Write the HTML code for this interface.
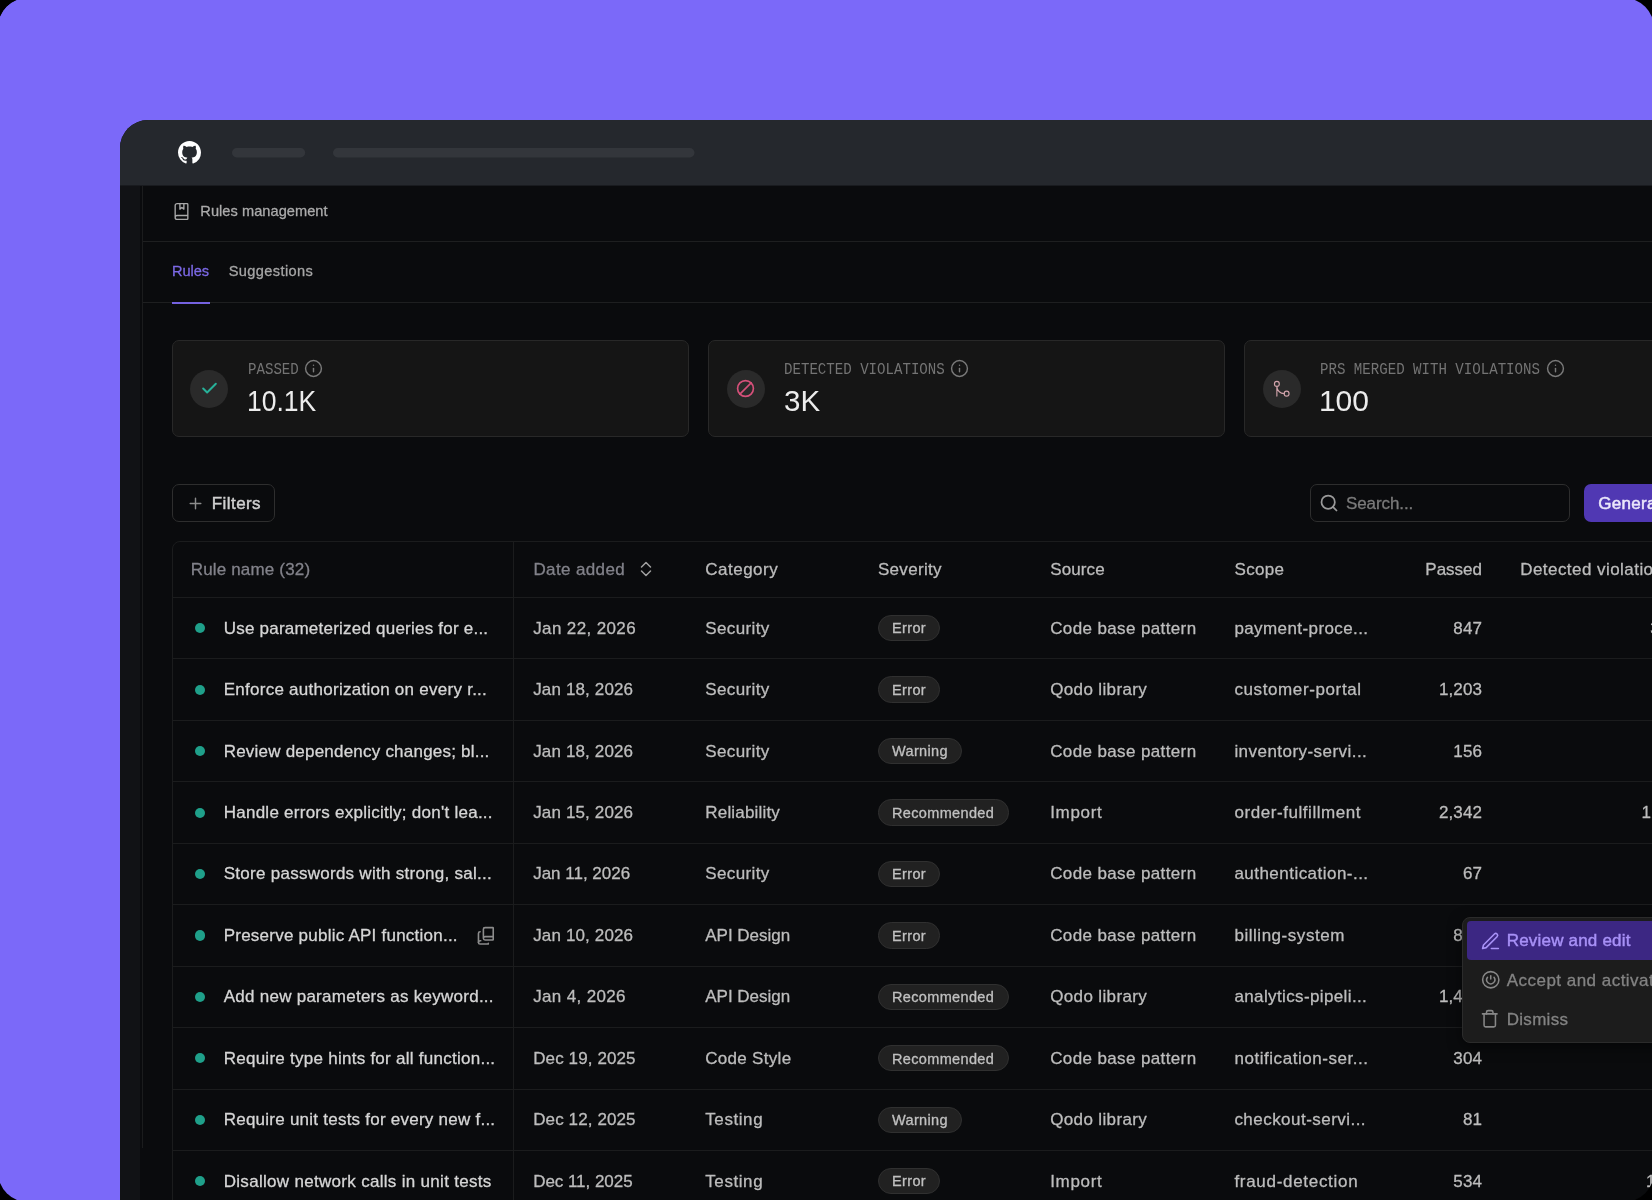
<!DOCTYPE html>
<html>
<head>
<meta charset="utf-8">
<style>
*{box-sizing:border-box;margin:0;padding:0}
html{background:#000;}
body{width:1652px;height:1200px;overflow:hidden;position:relative;background:#000;font-family:"Liberation Sans",sans-serif;}
.page{position:absolute;left:-2px;top:-2px;width:1656px;height:1204px;border-radius:30px;overflow:hidden;}
.bg{position:absolute;left:0;top:0;background:#7b69f9;}
.win{position:absolute;left:122px;top:122px;width:1700px;height:1200px;background:#0a0b0d;border-top-left-radius:28px;overflow:hidden;}
.abs{position:absolute;left:-120px;top:-120px;width:1652px;height:1200px;will-change:transform;}
.abs *{position:absolute;}
.topbar{left:120px;top:120px;width:1600px;height:65px;background:#25282d;}
.ph{background:#33363b;height:10px;border-radius:5px;top:148px;}
.side{left:120px;top:185px;width:20px;height:1100px;background:#111215;}
.sideline{left:142px;top:185px;width:1px;height:963px;background:#1b1c1d;}
.hline{left:143px;width:1600px;height:1px;background:#1e1f20;}
.t{white-space:pre;line-height:20px;height:20px;-webkit-text-stroke:.3px;}
.card{top:340px;height:97px;width:517px;background:#151515;border:1px solid #282828;border-radius:7px;}
.circ{width:38px;height:38px;border-radius:50%;background:#2a2a2a;top:369.500px;}
.lab{font-family:"Liberation Mono",monospace;font-size:15.6px;color:#747474;top:360.400px;line-height:20px;white-space:pre;transform:scaleX(.904);transform-origin:0 0;}
.val{font-size:30px;color:#ececec;top:383.800px;line-height:34px;white-space:pre;transform-origin:0 0;}
.btn{border:1px solid #2e2e2e;border-radius:7px;}
svg{overflow:visible}
.ic{fill:none;stroke-linecap:round;stroke-linejoin:round;}
.tbl{left:172px;top:541px;width:1600px;height:700px;border:1px solid #1b1c1d;border-radius:8px 0 0 0;}
.rl{left:173px;width:1600px;height:1px;background:#1b1c1d;}
.vl{left:513px;top:542px;width:1px;height:700px;background:#1b1c1d;}
.row{left:0;width:1652px;height:61px;}
.row .t{font-size:17px;letter-spacing:.3px;color:#bdbdbd;top:21.400px;}
.row .n{color:#d6d6d6;}
.dot{left:194.900px;top:25.900px;width:10.200px;height:10.200px;border-radius:50%;background:#1fa08a;}
.row .c6{left:1382px;width:100px;text-align:right;letter-spacing:.1px;}
.badge{left:878px;top:17.700px;height:26.400px;border-radius:13.200px;background:#212121;border:1px solid #303030;}
.row .badge .t{left:13px;top:2.500px;font-size:14.500px;letter-spacing:.35px;color:#c0c0c0;line-height:20px;height:20px;}
.hd .t{font-size:17px;letter-spacing:.3px;color:#bcbcbc;top:559.600px;}
.hd .dim{color:#82828a;}
.menu{left:1462px;top:917px;width:260px;height:126px;background:#1c1c1c;border:1px solid #2b2b2b;border-radius:8px;box-shadow:0 4px 14px rgba(0,0,0,.5);}
.mi{left:4px;width:260px;height:39px;}
.mi .t{left:39.700px;top:10px;font-size:17px;letter-spacing:.3px;color:#838383;}
.mi.on{background:#3c2783;border-radius:4px 0 0 4px;}
.mi.on .t{color:#a891f7;-webkit-text-stroke:.45px;}
</style>
</head>
<body>
<div class="page">
<div class="bg" style="width:1656px;height:170px"></div><div class="bg" style="width:170px;height:1204px"></div>
<div class="win"><div class="abs">

<div class="side"></div>
<div class="sideline"></div>
<div class="topbar"></div>
<div style="left:120px;top:185px;width:1600px;height:1px;background:#191b1f"></div>
<svg style="left:178.200px;top:140.800px" width="23" height="23" viewBox="0 0 16 16"><path fill="#ffffff" d="M8 0c4.42 0 8 3.58 8 8a8.013 8.013 0 0 1-5.45 7.59c-.4.08-.55-.17-.55-.38 0-.27.01-1.13.01-2.2 0-.75-.25-1.23-.54-1.48 1.78-.2 3.65-.88 3.65-3.95 0-.88-.31-1.59-.82-2.15.08-.2.36-1.02-.08-2.12 0 0-.67-.22-2.2.82-.64-.18-1.32-.27-2-.27-.68 0-1.36.09-2 .27-1.53-1.03-2.2-.82-2.2-.82-.44 1.1-.16 1.92-.08 2.12-.51.56-.82 1.28-.82 2.15 0 3.06 1.86 3.75 3.64 3.95-.23.2-.44.55-.51 1.07-.46.21-1.61.55-2.33-.66-.15-.24-.6-.83-1.23-.82-.67.01-.27.38.01.53.34.19.73.9.82 1.13.16.45.68 1.31 2.69.94 0 .67.01 1.3.01 1.49 0 .21-.15.45-.55.38A7.995 7.995 0 0 1 0 8c0-4.42 3.58-8 8-8Z"/></svg>
<svg style="left:0;top:0" width="800" height="200"><rect x="232" y="148.100" width="73.200" height="9.400" rx="4.700" fill="#33363b"/><rect x="333" y="148.100" width="361.500" height="9.400" rx="4.700" fill="#33363b"/></svg>

<!-- section title -->
<svg class="ic" style="left:171.600px;top:201.600px" width="19" height="19" viewBox="0 0 24 24" stroke="#a9a9a9" stroke-width="1.7"><path d="M10 2v7l2.500-2.200L15 9V2"/><path d="M4 19.500v-15A2.500 2.500 0 0 1 6.500 2H19a1 1 0 0 1 1 1v18a1 1 0 0 1-1 1H6.500a1 1 0 0 1 0-5H20"/></svg>
<div class="t" style="left:200.300px;top:200.800px;font-size:14.600px;color:#ababab;letter-spacing:0.049px">Rules management</div>
<div class="hline" style="top:241px"></div>

<!-- tabs -->
<div class="t" style="left:172px;top:261.300px;font-size:14.600px;color:#7c69e6;letter-spacing:-0.078px">Rules</div>
<div class="t" style="left:228.700px;top:261.300px;font-size:14.600px;color:#a6a6a6;letter-spacing:0.387px">Suggestions</div>
<div class="hline" style="top:302px"></div>
<div style="left:171.600px;top:301.600px;width:38px;height:2.400px;background:#7562e0"></div>

<!-- stat cards -->
<div class="card" style="left:172px"></div>
<div class="card" style="left:708px"></div>
<div class="card" style="left:1244px"></div>

<div class="circ" style="left:190px"></div>
<svg class="ic" style="left:199.700px;top:378.600px" width="19" height="19" viewBox="0 0 24 24" stroke="#27b199" stroke-width="2.5"><path d="M20 6 9 17l-5-5"/></svg>
<div class="lab" style="left:247.500px">PASSED</div>
<svg class="ic" style="left:303.8px;top:359.0px" width="19" height="19" viewBox="0 0 24 24" stroke="#7a7a7a" stroke-width="1.8"><circle cx="12" cy="12" r="10"/><path d="M12 16v-4"/><path d="M12 8h.01"/></svg>
<div class="val" style="left:246.500px;transform:scaleX(.884)">10.1K</div>

<div class="circ" style="left:726.500px"></div>
<svg class="ic" style="left:736.100px;top:379px" width="19" height="19" viewBox="0 0 24 24" stroke="#d6507a" stroke-width="2.1"><circle cx="12" cy="12" r="10"/><path d="M4.900 19.100 19.100 4.900"/></svg>
<div class="lab" style="left:783.800px">DETECTED VIOLATIONS</div>
<svg class="ic" style="left:949.8px;top:359.0px" width="19" height="19" viewBox="0 0 24 24" stroke="#7a7a7a" stroke-width="1.8"><circle cx="12" cy="12" r="10"/><path d="M12 16v-4"/><path d="M12 8h.01"/></svg>
<div class="val" style="left:783.500px;transform:scaleX(.985)">3K</div>

<div class="circ" style="left:1262.700px"></div>
<svg class="ic" style="left:1272.200px;top:378.900px" width="19.500" height="19.500" viewBox="0 0 24 24" stroke="#d2a4ac" stroke-width="1.4"><circle cx="18" cy="18" r="3"/><circle cx="6" cy="6" r="3"/><path d="M6 21V9a9 9 0 0 0 9 9"/></svg>
<div class="lab" style="left:1319.700px">PRS MERGED WITH VIOLATIONS</div>
<svg class="ic" style="left:1545.8px;top:359.0px" width="19" height="19" viewBox="0 0 24 24" stroke="#7a7a7a" stroke-width="1.8"><circle cx="12" cy="12" r="10"/><path d="M12 16v-4"/><path d="M12 8h.01"/></svg>
<div class="val" style="left:1318.900px">100</div>

<!-- toolbar -->
<div class="btn" style="left:171.700px;top:484px;width:103.800px;height:38px"></div>
<svg class="ic" style="left:187.700px;top:495.800px" width="15" height="15" viewBox="0 0 24 24" stroke="#8c8c8c" stroke-width="2.300"><path d="M3.500 12h17M12 3.500v17"/></svg>
<div class="t" style="left:211.800px;top:493.500px;font-size:17px;letter-spacing:0.42px;color:#d0d0d0;-webkit-text-stroke:.45px">Filters</div>

<div class="btn" style="left:1310px;top:484px;width:260px;height:38px"></div>
<svg class="ic" style="left:1318.700px;top:492.900px" width="20" height="20" viewBox="0 0 24 24" stroke="#9a9a9a" stroke-width="2.100"><circle cx="11" cy="11" r="8"/><path d="m21 21-4.300-4.300"/></svg>
<div class="t" style="left:1346px;top:494px;font-size:17px;letter-spacing:-0.093px;color:#7b7b7b">Search...</div>

<div style="left:1584px;top:484px;width:120px;height:38px;background:#5038b3;border-radius:7px 0 0 7px"></div>
<div class="t" style="left:1598.200px;top:494px;font-size:17px;letter-spacing:.3px;color:#ece8fb;-webkit-text-stroke:.5px">Generate rules</div>

<!-- table -->
<div class="tbl"></div>
<div class="vl"></div>

<div class="hd"><div class="t dim" style="left:190.7px;letter-spacing:0.171px;">Rule name (32)</div><div class="t dim" style="left:533.4px;letter-spacing:0.377px;">Date added</div><div class="t " style="left:705.3px;letter-spacing:0.488px;">Category</div><div class="t " style="left:877.9px;letter-spacing:0.325px;">Severity</div><div class="t " style="left:1050.3px;letter-spacing:0.085px;">Source</div><div class="t " style="left:1234.6px;letter-spacing:0.299px;">Scope</div><div class="t " style="left:1520.2px;letter-spacing:0.45px;">Detected violations</div><div class="t" style="left:1382px;width:100px;text-align:right;letter-spacing:-0.001px">Passed</div></div>
<svg class="ic" style="left:640.300px;top:561.200px" width="12" height="16" viewBox="0 0 12 16" stroke="#a0a0a0" stroke-width="1.500"><path d="M1.500 6 6 1.500 10.500 6"/><path d="M1.500 10 6 14.500 10.500 10"/></svg>

<div class="rl" style="top:597px"></div>
<div class="rl" style="top:658px"></div>
<div class="rl" style="top:720px"></div>
<div class="rl" style="top:781px"></div>
<div class="rl" style="top:843px"></div>
<div class="rl" style="top:904px"></div>
<div class="rl" style="top:966px"></div>
<div class="rl" style="top:1027px"></div>
<div class="rl" style="top:1089px"></div>
<div class="rl" style="top:1150px"></div>
<div class="rl" style="top:1211px"></div>

<div class="row" style="top:597.30px"><div class="dot"></div><div class="t n" style="left:223.7px;letter-spacing:0.224px;">Use parameterized queries for e...</div><div class="t " style="left:533.2px;letter-spacing:0.372px;">Jan 22, 2026</div><div class="t " style="left:705.3px;letter-spacing:0.375px;">Security</div><div class="badge" style="width:62.4px"><div class="t">Error</div></div><div class="t " style="left:1050.2px;letter-spacing:0.376px;">Code base pattern</div><div class="t " style="left:1234.4px;letter-spacing:0.409px;">payment-proce...</div><div class="t c6">847</div><div class="t" style="left:1650.300px">3</div></div>
<div class="row" style="top:658.74px"><div class="dot"></div><div class="t n" style="left:223.7px;letter-spacing:0.263px;">Enforce authorization on every r...</div><div class="t " style="left:533.2px;letter-spacing:0.144px;">Jan 18, 2026</div><div class="t " style="left:705.3px;letter-spacing:0.375px;">Security</div><div class="badge" style="width:62.4px"><div class="t">Error</div></div><div class="t " style="left:1050.2px;letter-spacing:0.367px;">Qodo library</div><div class="t " style="left:1234.4px;letter-spacing:0.614px;">customer-portal</div><div class="t c6">1,203</div></div>
<div class="row" style="top:720.18px"><div class="dot"></div><div class="t n" style="left:223.7px;letter-spacing:0.216px;">Review dependency changes; bl...</div><div class="t " style="left:533.2px;letter-spacing:0.144px;">Jan 18, 2026</div><div class="t " style="left:705.3px;letter-spacing:0.375px;">Security</div><div class="badge" style="width:83.6px"><div class="t">Warning</div></div><div class="t " style="left:1050.2px;letter-spacing:0.376px;">Code base pattern</div><div class="t " style="left:1234.4px;letter-spacing:0.456px;">inventory-servi...</div><div class="t c6">156</div></div>
<div class="row" style="top:781.62px"><div class="dot"></div><div class="t n" style="left:223.7px;letter-spacing:0.259px;">Handle errors explicitly; don't lea...</div><div class="t " style="left:533.2px;letter-spacing:0.144px;">Jan 15, 2026</div><div class="t " style="left:705.3px;letter-spacing:0.18px;">Reliability</div><div class="badge" style="width:130.6px"><div class="t">Recommended</div></div><div class="t " style="left:1050.2px;letter-spacing:0.692px;">Import</div><div class="t " style="left:1234.4px;letter-spacing:0.565px;">order-fulfillment</div><div class="t c6">2,342</div><div class="t" style="left:1641.6px">12</div></div>
<div class="row" style="top:843.06px"><div class="dot"></div><div class="t n" style="left:223.7px;letter-spacing:0.272px;">Store passwords with strong, sal...</div><div class="t " style="left:533.2px;letter-spacing:-0.013px;">Jan 11, 2026</div><div class="t " style="left:705.3px;letter-spacing:0.375px;">Security</div><div class="badge" style="width:62.4px"><div class="t">Error</div></div><div class="t " style="left:1050.2px;letter-spacing:0.376px;">Code base pattern</div><div class="t " style="left:1234.4px;letter-spacing:0.47px;">authentication-...</div><div class="t c6">67</div></div>
<div class="row" style="top:904.50px"><div class="dot"></div><div class="t n" style="left:223.7px;letter-spacing:0.237px;">Preserve public API function...</div><div class="t " style="left:533.2px;letter-spacing:0.144px;">Jan 10, 2026</div><div class="t " style="left:705.3px;letter-spacing:-0.027px;">API Design</div><div class="badge" style="width:62.4px"><div class="t">Error</div></div><div class="t " style="left:1050.2px;letter-spacing:0.376px;">Code base pattern</div><div class="t " style="left:1234.4px;letter-spacing:0.536px;">billing-system</div><div class="t c6">892</div><svg class="ic" style="left:475.900px;top:21.500px" width="19.700" height="19.700" viewBox="0 0 24 24" stroke="#8c8c8c" stroke-width="1.950"><path d="M5 7a2 2 0 0 0-2 2v11"/><path d="M5.803 18H5a2 2 0 0 0 0 4h9.500a.5.500 0 0 0 .5-.5V21"/><path d="M9 15V4a2 2 0 0 1 2-2h9.500a.5.500 0 0 1 .5.500v14a.5.500 0 0 1-.5.500H11a2 2 0 0 1 0-4h10"/></svg></div>
<div class="row" style="top:965.94px"><div class="dot"></div><div class="t n" style="left:223.7px;letter-spacing:0.263px;">Add new parameters as keyword...</div><div class="t " style="left:533.2px;letter-spacing:0.354px;">Jan 4, 2026</div><div class="t " style="left:705.3px;letter-spacing:-0.027px;">API Design</div><div class="badge" style="width:130.6px"><div class="t">Recommended</div></div><div class="t " style="left:1050.2px;letter-spacing:0.367px;">Qodo library</div><div class="t " style="left:1234.4px;letter-spacing:0.377px;">analytics-pipeli...</div><div class="t c6">1,456</div></div>
<div class="row" style="top:1027.38px"><div class="dot"></div><div class="t n" style="left:223.7px;letter-spacing:0.261px;">Require type hints for all function...</div><div class="t " style="left:533.2px;letter-spacing:0.114px;">Dec 19, 2025</div><div class="t " style="left:705.3px;letter-spacing:0.292px;">Code Style</div><div class="badge" style="width:130.6px"><div class="t">Recommended</div></div><div class="t " style="left:1050.2px;letter-spacing:0.376px;">Code base pattern</div><div class="t " style="left:1234.4px;letter-spacing:0.551px;">notification-ser...</div><div class="t c6">304</div></div>
<div class="row" style="top:1088.82px"><div class="dot"></div><div class="t n" style="left:223.7px;letter-spacing:0.242px;">Require unit tests for every new f...</div><div class="t " style="left:533.2px;letter-spacing:0.114px;">Dec 12, 2025</div><div class="t " style="left:705.3px;letter-spacing:0.571px;">Testing</div><div class="badge" style="width:83.6px"><div class="t">Warning</div></div><div class="t " style="left:1050.2px;letter-spacing:0.367px;">Qodo library</div><div class="t " style="left:1234.4px;letter-spacing:0.465px;">checkout-servi...</div><div class="t c6">81</div></div>
<div class="row" style="top:1150.26px"><div class="dot"></div><div class="t n" style="left:223.7px;letter-spacing:0.305px;">Disallow network calls in unit tests</div><div class="t " style="left:533.2px;letter-spacing:-0.043px;">Dec 11, 2025</div><div class="t " style="left:705.3px;letter-spacing:0.571px;">Testing</div><div class="badge" style="width:62.4px"><div class="t">Error</div></div><div class="t " style="left:1050.2px;letter-spacing:0.692px;">Import</div><div class="t " style="left:1234.4px;letter-spacing:0.7px;">fraud-detection</div><div class="t c6">534</div><div class="t" style="left:1646px">15</div></div>

<!-- dropdown -->
<div class="menu">
<div class="mi on" style="top:3px"><svg class="ic" style="left:12.500px;top:10px" width="21" height="21" viewBox="0 0 24 24" stroke="#a891f7" stroke-width="1.800"><path d="M13 20h8"/><path d="M16.500 3.500a2.120 2.120 0 0 1 3 3L7 19l-4 1 1-4Z"/></svg><div class="t" style="letter-spacing:.2px">Review and edit</div></div>
<div class="mi" style="top:42.500px"><svg class="ic" style="left:13.500px;top:9.400px" width="19.500" height="19.500" viewBox="0 0 24 24" stroke="#878787" stroke-width="1.900"><circle cx="12" cy="12" r="10"/><path d="M12 7v4"/><path d="M7.998 9.003a5 5 0 1 0 8-.005"/></svg><div class="t" style="letter-spacing:.48px">Accept and activate</div></div>
<div class="mi" style="top:81.500px"><svg class="ic" style="left:13.400px;top:9.500px" width="19.500" height="19.500" viewBox="0 0 24 24" stroke="#878787" stroke-width="1.900"><path d="M3 6h18"/><path d="M19 6v14c0 1-1 2-2 2H7c-1 0-2-1-2-2V6"/><path d="M8 6V4c0-1 1-2 2-2h4c1 0 2 1 2 2v2"/></svg><div class="t">Dismiss</div></div>
</div>

</div></div>
</div>
</body>
</html>
